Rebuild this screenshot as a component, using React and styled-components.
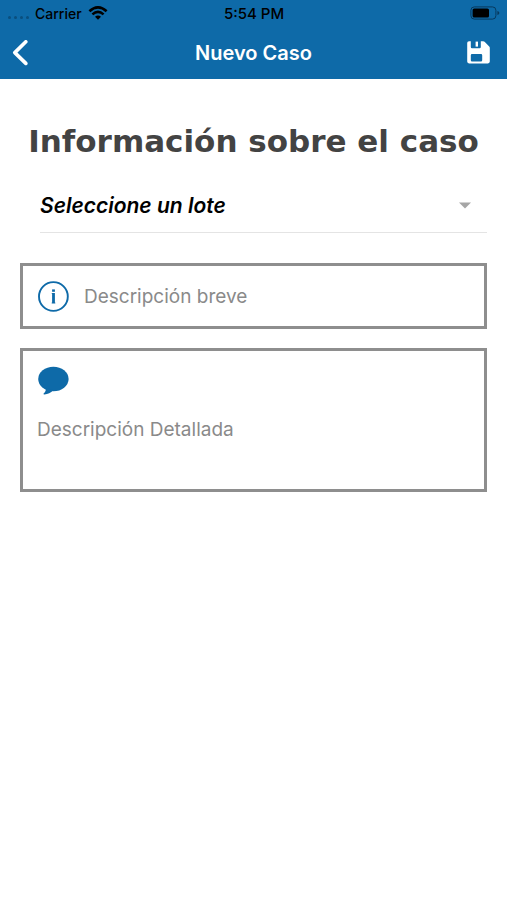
import styled, { createGlobalStyle } from "styled-components";
import { useState } from "react";

const GlobalStyle = createGlobalStyle`
  :root {
    --brand-color: #0e6aa8;
    --border-color: #8e8e8e;
    --label-color: #8a8a8a;
  }
  * {
    box-sizing: border-box;
  }
  body {
    margin: 0;
    background: #fff;
    font-family: Inter, Roboto, "Liberation Sans", sans-serif;
  }
`;

function WifiIcon() {
  return (
    <svg width="20" height="14" viewBox="0 0 20 14" aria-hidden="true">
      <path d="M1.4 5.2Q10 -2.4 18.6 5.2" fill="none" stroke="#000" strokeWidth="2.7" />
      <path d="M4.4 8.4Q10 3.4 15.6 8.4" fill="none" stroke="#000" strokeWidth="2.5" />
      <path d="M7 10.8Q10 8.2 13 10.8L10 13.8Z" fill="#000" />
    </svg>
  );
}

function BatteryIcon() {
  return (
    <svg width="30" height="14" viewBox="0 0 30 14" aria-hidden="true">
      <rect x="0.9" y="0.9" width="25" height="12.2" rx="3.4" fill="none" stroke="#073a5e" strokeWidth="1" />
      <rect x="2.6" y="2.5" width="16.4" height="9" rx="1.6" fill="#000" />
      <path d="M27.4 5Q29.4 5.4 29.4 7Q29.4 8.6 27.4 9Z" fill="#073a5e" />
    </svg>
  );
}

function BackIcon() {
  return (
    <svg width="16" height="26" viewBox="0 0 16 26" aria-hidden="true">
      <path d="M13.8 1.8L2.8 12.6L13.8 23.4" fill="none" stroke="#fff" strokeWidth="3.6" strokeLinecap="round" strokeLinejoin="round" />
    </svg>
  );
}

function SaveIcon() {
  return (
    <svg width="23" height="23" viewBox="0 0 23 23" aria-hidden="true">
      <path
        fill="#fff"
        fillRule="evenodd"
        d="M2 0.2H3.8V6Q3.8 7.2 5 7.2H12.6Q13.8 7.2 13.8 6V0.2H16.2Q17 0.2 17.6 0.8L22 5.2Q22.8 6 22.8 6.8V20.6Q22.8 22.4 21 22.4H2Q0.2 22.4 0.2 20.6V2Q0.2 0.2 2 0.2ZM5 13Q3.8 13 3.8 14.2V19.2Q3.8 20.4 5 20.4H14Q15.2 20.4 15.2 19.2V14.2Q15.2 13 14 13Z"
      />
      <rect x="8.6" y="0.6" width="2.4" height="5" fill="#fff" />
    </svg>
  );
}

function InfoIcon() {
  return (
    <svg width="32" height="32" viewBox="0 0 32 32" aria-hidden="true">
      <circle cx="16.4" cy="16.5" r="14.4" fill="none" stroke="#0e6aa8" strokeWidth="1.9" />
      <rect x="15.1" y="9.4" width="2.8" height="2.4" fill="#0e6aa8" />
      <path d="M14.7 13H17.9V22.6H18.3V23.4H14.7V22.6H15.1V13.8H14.7Z" fill="#0e6aa8" />
    </svg>
  );
}

function ChatIcon() {
  return (
    <svg width="32" height="30" viewBox="0 0 32 30" aria-hidden="true">
      <ellipse cx="16.4" cy="14" rx="15.2" ry="12.2" fill="#0e6aa8" />
      <path d="M8.6 22.6Q9.6 26 6.6 28.6Q6.2 29.6 7.4 29.5Q12.6 29 16.2 25.2Z" fill="#0e6aa8" />
    </svg>
  );
}

function App() {
  const [lote, setLote] = useState("");
  const [breve, setBreve] = useState("");
  const [detalle, setDetalle] = useState("");

  return (
    <>
      <GlobalStyle />
      <Header>
        <StatusBar>
          <Carrier>
            <Signal>
              <i />
              <i />
              <i />
              <i />
            </Signal>
            Carrier
            <WifiIcon />
          </Carrier>
          <Clock>5:54 PM</Clock>
          <Battery>
            <BatteryIcon />
          </Battery>
        </StatusBar>
        <NavBar>
          <NavButton type="button" aria-label="Volver">
            <BackIcon />
          </NavButton>
          <NavTitle>Nuevo Caso</NavTitle>
          <NavButton type="button" aria-label="Guardar" $end>
            <SaveIcon />
          </NavButton>
        </NavBar>
      </Header>
      <Form>
        <Heading>Información sobre el caso</Heading>
        <SelectRow>
          <LoteSelect
            aria-label="Seleccione un lote"
            value={lote}
            onChange={(evt) => setLote(evt.target.value)}
          >
            <option value="">Seleccione un lote</option>
          </LoteSelect>
          <svg width="12" height="7" viewBox="0 0 12 7" aria-hidden="true">
            <path d="M0 0.4H12L6 6.6Z" fill="#a6a6a6" />
          </svg>
        </SelectRow>
        <Field>
          <label htmlFor="breve">
            <InfoIcon />
          </label>
          <TextInput
            id="breve"
            aria-label="Descripción breve"
            placeholder="Descripción breve"
            value={breve}
            onChange={(evt) => setBreve(evt.target.value)}
          />
        </Field>
        <Field $column>
          <label htmlFor="detalle">
            <ChatIcon />
          </label>
          <TextArea
            id="detalle"
            aria-label="Descripción Detallada"
            placeholder="Descripción Detallada"
            value={detalle}
            onChange={(evt) => setDetalle(evt.target.value)}
          />
        </Field>
      </Form>
    </>
  );
}

export default App;

const Header = styled.header`
  background: var(--brand-color);
`;

const StatusBar = styled.div`
  display: grid;
  grid-template-columns: 1fr auto 1fr;
  align-items: center;
  height: 26px;
  padding: 0 7px 0 8px;
  font-size: 14px;
  font-weight: 500;
  color: #000;
`;

const Carrier = styled.div`
  display: flex;
  align-items: center;
  gap: 6px;
`;

const Clock = styled.span`
  font-size: 15px;
`;

const Signal = styled.span`
  display: flex;
  gap: 3px;
  padding-top: 8px;
  i {
    width: 3px;
    height: 3px;
    border-radius: 50%;
    background: #0a4f7e;
  }
`;

const Battery = styled.div`
  display: flex;
  justify-content: flex-end;
`;

const NavBar = styled.nav`
  display: grid;
  grid-template-columns: 1fr auto 1fr;
  align-items: center;
  height: 53px;
`;

const NavButton = styled.button`
  display: flex;
  justify-self: ${(props) => (props.$end ? "end" : "start")};
  padding: ${(props) => (props.$end ? "0 17px 0 0" : "0 0 0 12px")};
  border: none;
  background: none;
  cursor: pointer;
`;

const NavTitle = styled.h1`
  margin: 0;
  font-size: 20px;
  font-weight: 600;
  color: #fff;
`;

const Form = styled.form`
  display: flex;
  flex-direction: column;
  padding: 40px 20px;
`;

const Heading = styled.h2`
  margin: 0;
  font-family: "DejaVu Sans", Verdana, sans-serif;
  font-size: 31px;
  line-height: 44px;
  font-weight: bold;
  text-align: center;
  white-space: nowrap;
  color: #434343;
`;

const SelectRow = styled.div`
  display: flex;
  align-items: center;
  height: 56px;
  margin: 14px 0 30px 20px;
  padding: 2px 16px 0 0;
  border-bottom: 1px solid #e4e4e4;
`;

const LoteSelect = styled.select`
  flex: 1;
  appearance: none;
  padding: 0;
  border: none;
  outline: none;
  background: none;
  font-family: inherit;
  font-size: 21px;
  font-style: italic;
  font-weight: 600;
  color: #000;
`;

const Field = styled.div`
  display: flex;
  flex-direction: ${(props) => (props.$column ? "column" : "row")};
  align-items: ${(props) => (props.$column ? "stretch" : "center")};
  gap: 15px;
  margin-bottom: 19px;
  padding: 14px;
  border: 3px solid var(--border-color);
  label {
    display: flex;
  }
`;

const TextInput = styled.input`
  flex: 1;
  min-width: 0;
  height: 32px;
  padding: 0;
  border: none;
  outline: none;
  background: none;
  font-family: inherit;
  font-size: 19px;
  &::placeholder {
    color: var(--label-color);
    opacity: 1;
  }
`;

const TextArea = styled(TextInput).attrs({ as: "textarea" })`
  flex: none;
  height: 65px;
  padding-top: 8px;
  line-height: 24px;
  resize: none;
`;
